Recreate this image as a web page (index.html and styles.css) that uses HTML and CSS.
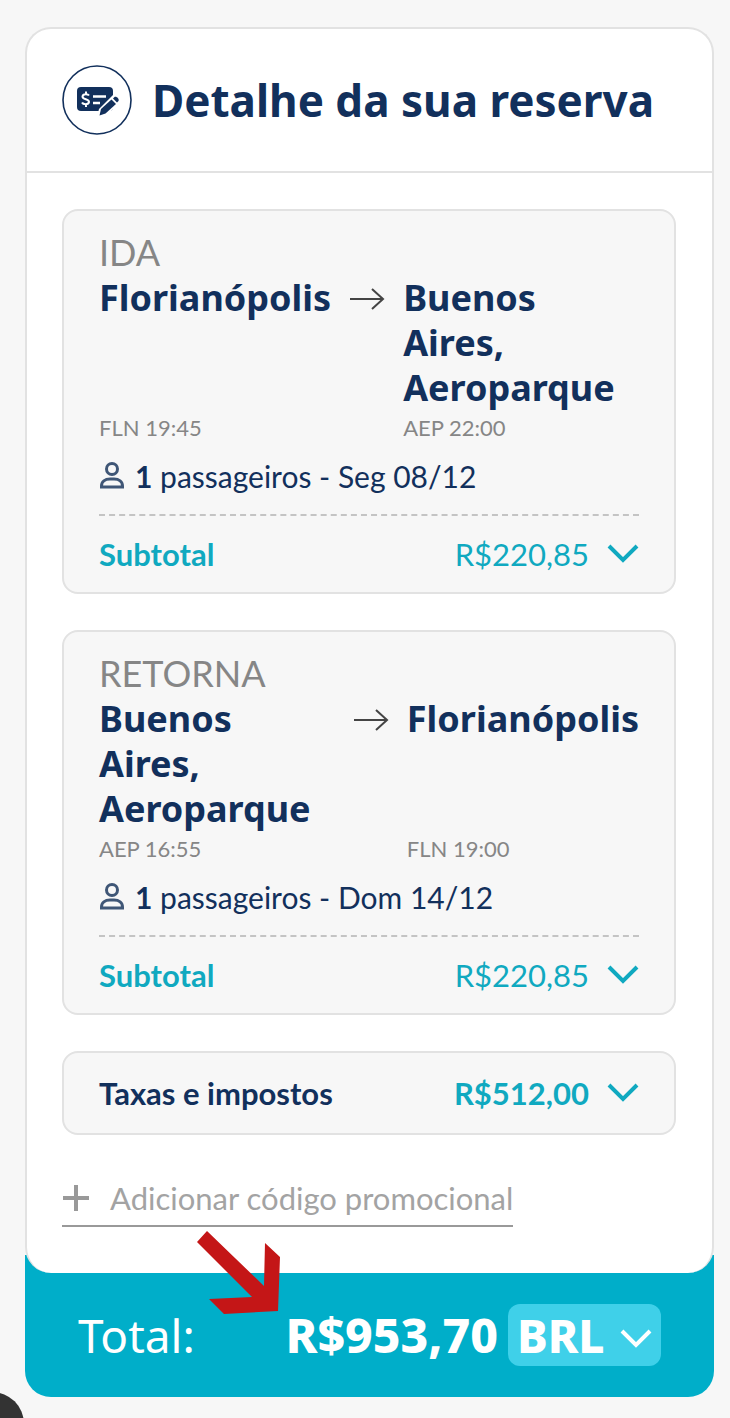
FILE: index.html
```
<!DOCTYPE html>
<html lang="pt-BR">
<head>
  <meta charset="UTF-8" />
  <meta name="viewport" content="width=device-width, initial-scale=1.0"/>
  <title>Detalhe da sua reserva</title>
  <link rel="stylesheet" href="styles.css">
</head>
<body>
  <main class="booking">
    <section class="card">
      <header class="card-header">
        <svg class="header-icon" viewBox="0 0 70 70" aria-hidden="true">
          <circle cx="35" cy="35" r="34" fill="none" stroke="#12305c" stroke-width="1.600"/>
          <rect x="15" y="22" width="36" height="24" rx="4" fill="#12305c"/>
          <path d="M27 30.500c-1-1.500-6-2-6.500 1 0 3.500 6.500 2 6.500 5.500-.5 3-6 2.500-7 .5M24 26.500v3M24 39v3" fill="none" stroke="#fff" stroke-width="2"/>
          <path d="M31 31.500h13M31 38h7" fill="none" stroke="#fff" stroke-width="2.400"/>
          <path d="M35 52l2-8 14-14 7 2-1 6-14 14z" fill="#fff"/>
          <path d="M37.500 50.500l1.500-6.500 10.500-9.500 4.500 4.500-10.500 9.500z" fill="#12305c"/>
          <path d="M51 33.500l1.500-1.500c2-1 5 2 4 4l-1.500 1.500z" fill="#12305c"/>
        </svg>
        <h1>Detalhe da sua reserva</h1>
      </header>

      <div class="card-body">
        <article class="box">
          <h2 class="leg-label">IDA</h2>
          <div class="route">
            <span class="city">Florianópolis</span>
            <svg class="arrow" viewBox="0 0 36 24" aria-hidden="true"><path d="M1 12h33M23 2l11 10-11 10"/></svg>
            <span class="city">Buenos Aires, Aeroparque</span>
            <span class="time">FLN 19:45</span>
            <span class="time time-to">AEP 22:00</span>
          </div>
          <p class="passengers">
            <svg class="person" viewBox="0 0 26 30" aria-hidden="true"><circle cx="13" cy="8" r="5.500"/><path d="M2.500 26v-1c0-4.500 3.500-7 8.500-7h4c5 0 8.500 2.500 8.500 7v1z"/></svg>
            <span><strong>1</strong> passageiros - Seg 08/12</span>
          </p>
          <button type="button" class="row subtotal">
            <strong>Subtotal</strong>
            <span class="amount">R$220,85</span>
            <svg class="chevron" viewBox="0 0 32 20" aria-hidden="true"><path d="M2 2l14 14 14-14"/></svg>
          </button>
        </article>

        <article class="box">
          <h2 class="leg-label">RETORNA</h2>
          <div class="route route-back">
            <span class="city">Buenos Aires, Aeroparque</span>
            <svg class="arrow" viewBox="0 0 36 24" aria-hidden="true"><path d="M1 12h33M23 2l11 10-11 10"/></svg>
            <span class="city">Florianópolis</span>
            <span class="time">AEP 16:55</span>
            <span class="time time-to">FLN 19:00</span>
          </div>
          <p class="passengers">
            <svg class="person" viewBox="0 0 26 30" aria-hidden="true"><circle cx="13" cy="8" r="5.500"/><path d="M2.500 26v-1c0-4.500 3.500-7 8.500-7h4c5 0 8.500 2.500 8.500 7v1z"/></svg>
            <span><strong>1</strong> passageiros - Dom 14/12</span>
          </p>
          <button type="button" class="row subtotal">
            <strong>Subtotal</strong>
            <span class="amount">R$220,85</span>
            <svg class="chevron" viewBox="0 0 32 20" aria-hidden="true"><path d="M2 2l14 14 14-14"/></svg>
          </button>
        </article>

        <div class="box">
          <button type="button" class="row taxes">
            <strong>Taxas e impostos</strong>
            <strong class="amount">R$512,00</strong>
            <svg class="chevron" viewBox="0 0 32 20" aria-hidden="true"><path d="M2 2l14 14 14-14"/></svg>
          </button>
        </div>

        <button type="button" class="promo">
          <svg class="plus" viewBox="0 0 28 28" aria-hidden="true"><path d="M14 1v26M1 14h26"/></svg>
          Adicionar código promocional
        </button>
      </div>
    </section>

    <footer class="total">
      <span class="total-label">Total:</span>
      <strong class="total-price">R$953,70</strong>
      <div class="currency">
        <select aria-label="Moeda">
          <option>BRL</option>
        </select>
        <svg class="chevron" viewBox="0 0 32 20" aria-hidden="true"><path d="M2 2l14 14 14-14"/></svg>
      </div>
    </footer>

    <svg class="pointer" viewBox="0 0 83 83" aria-hidden="true">
      <path d="M10 0L67 55 68 12 83 26 81 80 27 83 12 68 55 66 0 11z"/>
    </svg>
  </main>

  <button type="button" class="chat" aria-label="Chat"></button>
</body>
</html>
```
FILE: styles.css
```
* { box-sizing: border-box; margin: 0; padding: 0; }
body {
  font-family: Lato, sans-serif;
  font-size: 31px;
  background: #f7f7f7;
  color: #12305c;
}
button {
  font: inherit;
  color: inherit;
  background: none;
  border: none;
  text-align: left;
  cursor: pointer;
}

.booking {
  position: relative;
  margin: 27px 16px 20px 25px;
}

.card {
  position: relative;
  z-index: 1;
  background: #fff;
  border: 2px solid #e2e2e2;
  border-bottom: none;
  border-radius: 26px;
}
.card-header {
  display: flex;
  align-items: center;
  gap: 20px;
  padding: 36px 35px;
  border-bottom: 2px solid #e2e2e2;
}
.card-header h1 {
  font-family: "Noto Sans", sans-serif;
  font-size: 44px;
  line-height: 70px;
  white-space: nowrap;
}
.header-icon {
  width: 70px;
  height: 70px;
  flex: none;
}
.card-body {
  display: flex;
  flex-direction: column;
  gap: 36px;
  padding: 36px 36px 46px 35px;
}

.box {
  background: #f7f7f7;
  border: 2px solid #e2e2e2;
  border-radius: 16px;
  padding: 0 35px;
}
.leg-label {
  margin-top: 19px;
  font-size: 36px;
  font-weight: normal;
  line-height: 45px;
  color: #868686;
}
.route {
  display: grid;
  grid-template-columns: auto 36px 1fr;
  column-gap: 18px;
}
.route-back {
  grid-template-columns: 1fr 36px auto;
}
.city {
  width: min-content;
  font-family: "Noto Sans", sans-serif;
  font-size: 36px;
  font-weight: bold;
  line-height: 45px;
}
.time {
  font-size: 22px;
  line-height: 36px;
  color: #868686;
}
.time-to {
  grid-column: 3;
}
.arrow {
  width: 36px;
  height: 24px;
  margin-top: 12px;
  fill: none;
  stroke: #444;
  stroke-width: 2;
}
.passengers {
  display: flex;
  align-items: center;
  gap: 10px;
  margin: 10px 0 18px;
  font-size: 30px;
  line-height: 40px;
}
.person {
  width: 26px;
  height: 30px;
  fill: none;
  stroke: #3f5676;
  stroke-width: 3;
}

.row {
  display: flex;
  align-items: center;
  width: 100%;
}
.subtotal {
  height: 78px;
  border-top: 2px dashed #c4c4c4;
  color: #10a9c0;
}
.taxes {
  height: 80px;
}
.amount {
  margin-left: auto;
  color: #10a9c0;
}
.chevron {
  width: 32px;
  height: 20px;
  margin-left: 18px;
  fill: none;
  stroke: #10a9c0;
  stroke-width: 4;
}

.promo {
  display: flex;
  align-items: center;
  align-self: flex-start;
  gap: 20px;
  padding: 8px 0;
  line-height: 38px;
  border-bottom: 2px solid #999;
  color: #a3a3a3;
}
.plus {
  width: 28px;
  height: 28px;
  fill: none;
  stroke: #999;
  stroke-width: 4;
}

.total {
  display: flex;
  align-items: center;
  margin-top: -18px;
  padding: 49px 53px 31px;
  background: #00aec9;
  border-radius: 0 0 26px 26px;
  color: #fff;
  font-family: "Noto Sans", sans-serif;
  font-size: 46px;
  line-height: 62px;
}
.total-price {
  margin-left: auto;
  font-size: 48px;
  font-weight: 800;
}
.currency {
  position: relative;
  margin-left: 10px;
}
.currency select {
  display: block;
  width: 153px;
  height: 62px;
  padding-left: 9px;
  appearance: none;
  background: #3fd0e9;
  border: none;
  border-radius: 12px;
  color: #fff;
  font: inherit;
  font-weight: 800;
}
.currency .chevron {
  position: absolute;
  top: 25px;
  right: 9px;
  stroke: #fff;
  pointer-events: none;
}

/* red arrow over the card, pointing at the total */
.pointer {
  position: absolute;
  z-index: 2;
  left: 172px;
  bottom: 83px;
  width: 83px;
  height: 83px;
  fill: #c41617;
}

.chat {
  position: fixed;
  left: -40px;
  bottom: -38px;
  width: 64px;
  height: 64px;
  border-radius: 50%;
  background: #333;
}
```
